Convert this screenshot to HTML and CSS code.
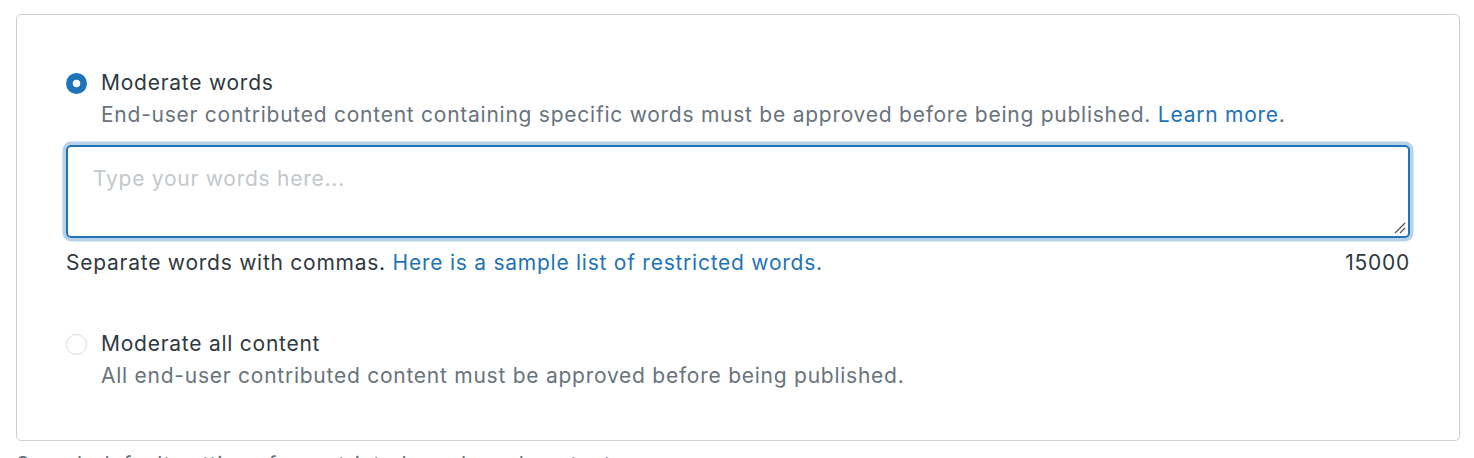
FILE: index.html
```html
<!DOCTYPE html>
<html lang="en">
<head>
<meta charset="utf-8">
<title>Moderation</title>
<link rel="stylesheet" href="styles.css">
</head>
<body>
<div class="page">
  <div class="card">
    <div class="option">
      <span class="radio radio-checked"></span>
      <div class="option-body">
        <div class="label">Moderate words</div>
        <div class="desc">End-user contributed content containing specific words must be approved before being published. <a class="link" href="#">Learn more</a>.</div>
      </div>
    </div>
    <div class="field">
      <div class="textarea">
        <span class="placeholder">Type your words here...</span>
        <svg class="grip" width="14" height="14" viewBox="0 0 14 14"><path d="M13 3 L3 13 M13 8 L8 13" stroke="#555" stroke-width="1.3" fill="none"/></svg>
      </div>
      <div class="hint-row">
        <span class="hint">Separate words with commas. <a class="link" href="#">Here is a sample list of restricted words.</a></span>
        <span class="count">15000</span>
      </div>
    </div>
    <div class="option option-second">
      <span class="radio"></span>
      <div class="option-body">
        <div class="label">Moderate all content</div>
        <div class="desc">All end-user contributed content must be approved before being published.</div>
      </div>
    </div>
  </div>
  <div class="footer-text">Search default settings for restricted words and content.</div>
</div>
</body>
</html>
```
FILE: styles.css
```css
html, body {
  margin: 0;
  padding: 0;
  background: #fff;
  overflow: hidden;
}
body {
  font-family: Inter, "Noto Sans", sans-serif;
  font-size: 21px;
  letter-spacing: 0.75px;
  color: #2f3941;
}
.page {
  padding: 14px 14px 0 16px;
}
.card {
  border: 1.5px solid #cfcfcf;
  border-radius: 5px;
  padding: 53px 49px 48px 49px;
}
.option {
  display: flex;
  align-items: flex-start;
}
.radio {
  flex: none;
  width: 21px;
  height: 21px;
  box-sizing: border-box;
  border-radius: 50%;
  border: 1.5px solid #d8dcde;
  margin-top: 5px;
  margin-right: 14px;
  background: #fff;
}
.radio-checked {
  border: none;
  background: radial-gradient(circle, #fff 0 3.5px, #1f73b7 4.2px);
}
.label {
  line-height: 30px;
  color: #2f3941;
}
.desc {
  line-height: 33px;
  color: #68737d;
}
.link {
  color: #1f73b7;
  text-decoration: none;
}
.field {
  margin-top: 14px;
}
.textarea {
  position: relative;
  height: 93px;
  box-sizing: border-box;
  border: 2px solid #1f73b7;
  border-radius: 5px;
  box-shadow: 0 0 0 3.5px rgba(31, 115, 183, 0.32);
  padding: 17px 25px;
}
.placeholder {
  color: #c2c8cc;
  line-height: 30px;
}
.grip {
  position: absolute;
  right: 2px;
  bottom: 2px;
}
.hint-row {
  display: flex;
  justify-content: space-between;
  margin-top: 10px;
  line-height: 30px;
}
.option-second {
  margin-top: 51px;
}
.footer-text {
  margin-top: 9px;
  color: #68737d;
  line-height: 30px;
}
```
